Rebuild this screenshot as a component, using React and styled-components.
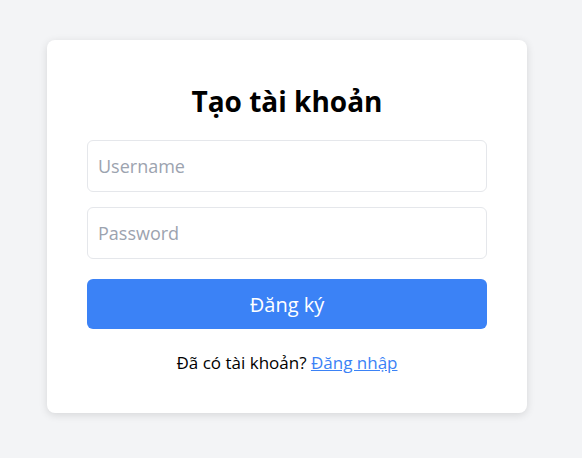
import React from 'react';
import styled, { createGlobalStyle } from 'styled-components';

const GlobalStyle = createGlobalStyle`
  html, body {
    margin: 0;
    padding: 0;
    background: #f3f4f6;
    font-family: "Open Sans", "Noto Sans", sans-serif;
  }
  * { box-sizing: border-box; }
`;

const Page = styled.div`
  min-height: 458px;
  padding: 40px 0 0 47px;
`;

const Card = styled.form`
  width: 480px;
  padding: 40px;
  background: #ffffff;
  border-radius: 8px;
  box-shadow: 0 2px 8px rgba(0, 0, 0, 0.12);
  display: flex;
  flex-direction: column;
`;

const Title = styled.h2`
  margin: 0 0 18px;
  font-size: 28px;
  line-height: 42px;
  font-weight: 700;
  color: #000;
  text-align: center;
`;

const Field = styled.input`
  height: 52px;
  margin-bottom: ${(p) => p.$gap}px;
  padding: 0 10px;
  border: 1px solid #e5e7eb;
  border-radius: 6px;
  font-family: inherit;
  font-size: 18px;
  color: #111;
  outline: none;
  &::placeholder { color: #9ca3af; }
`;

const Submit = styled.button`
  height: 50px;
  border: none;
  border-radius: 6px;
  background: #3b82f6;
  color: #fff;
  font-family: inherit;
  font-size: 20px;
  cursor: pointer;
`;

const Footer = styled.p`
  margin: 23px 0 0;
  font-size: 17px;
  line-height: 21px;
  text-align: center;
  color: #000;
`;

const Link = styled.a`
  color: #3b82f6;
  text-decoration: underline;
`;

export default function App() {
  return (
    <>
      <GlobalStyle />
      <Page>
        <Card onSubmit={(e) => e.preventDefault()}>
          <Title>Tạo tài khoản</Title>
          <Field $gap={15} placeholder="Username" />
          <Field $gap={20} type="password" placeholder="Password" />
          <Submit type="submit">Đăng ký</Submit>
          <Footer>
            Đã có tài khoản? <Link href="#">Đăng nhập</Link>
          </Footer>
        </Card>
      </Page>
    </>
  );
}
